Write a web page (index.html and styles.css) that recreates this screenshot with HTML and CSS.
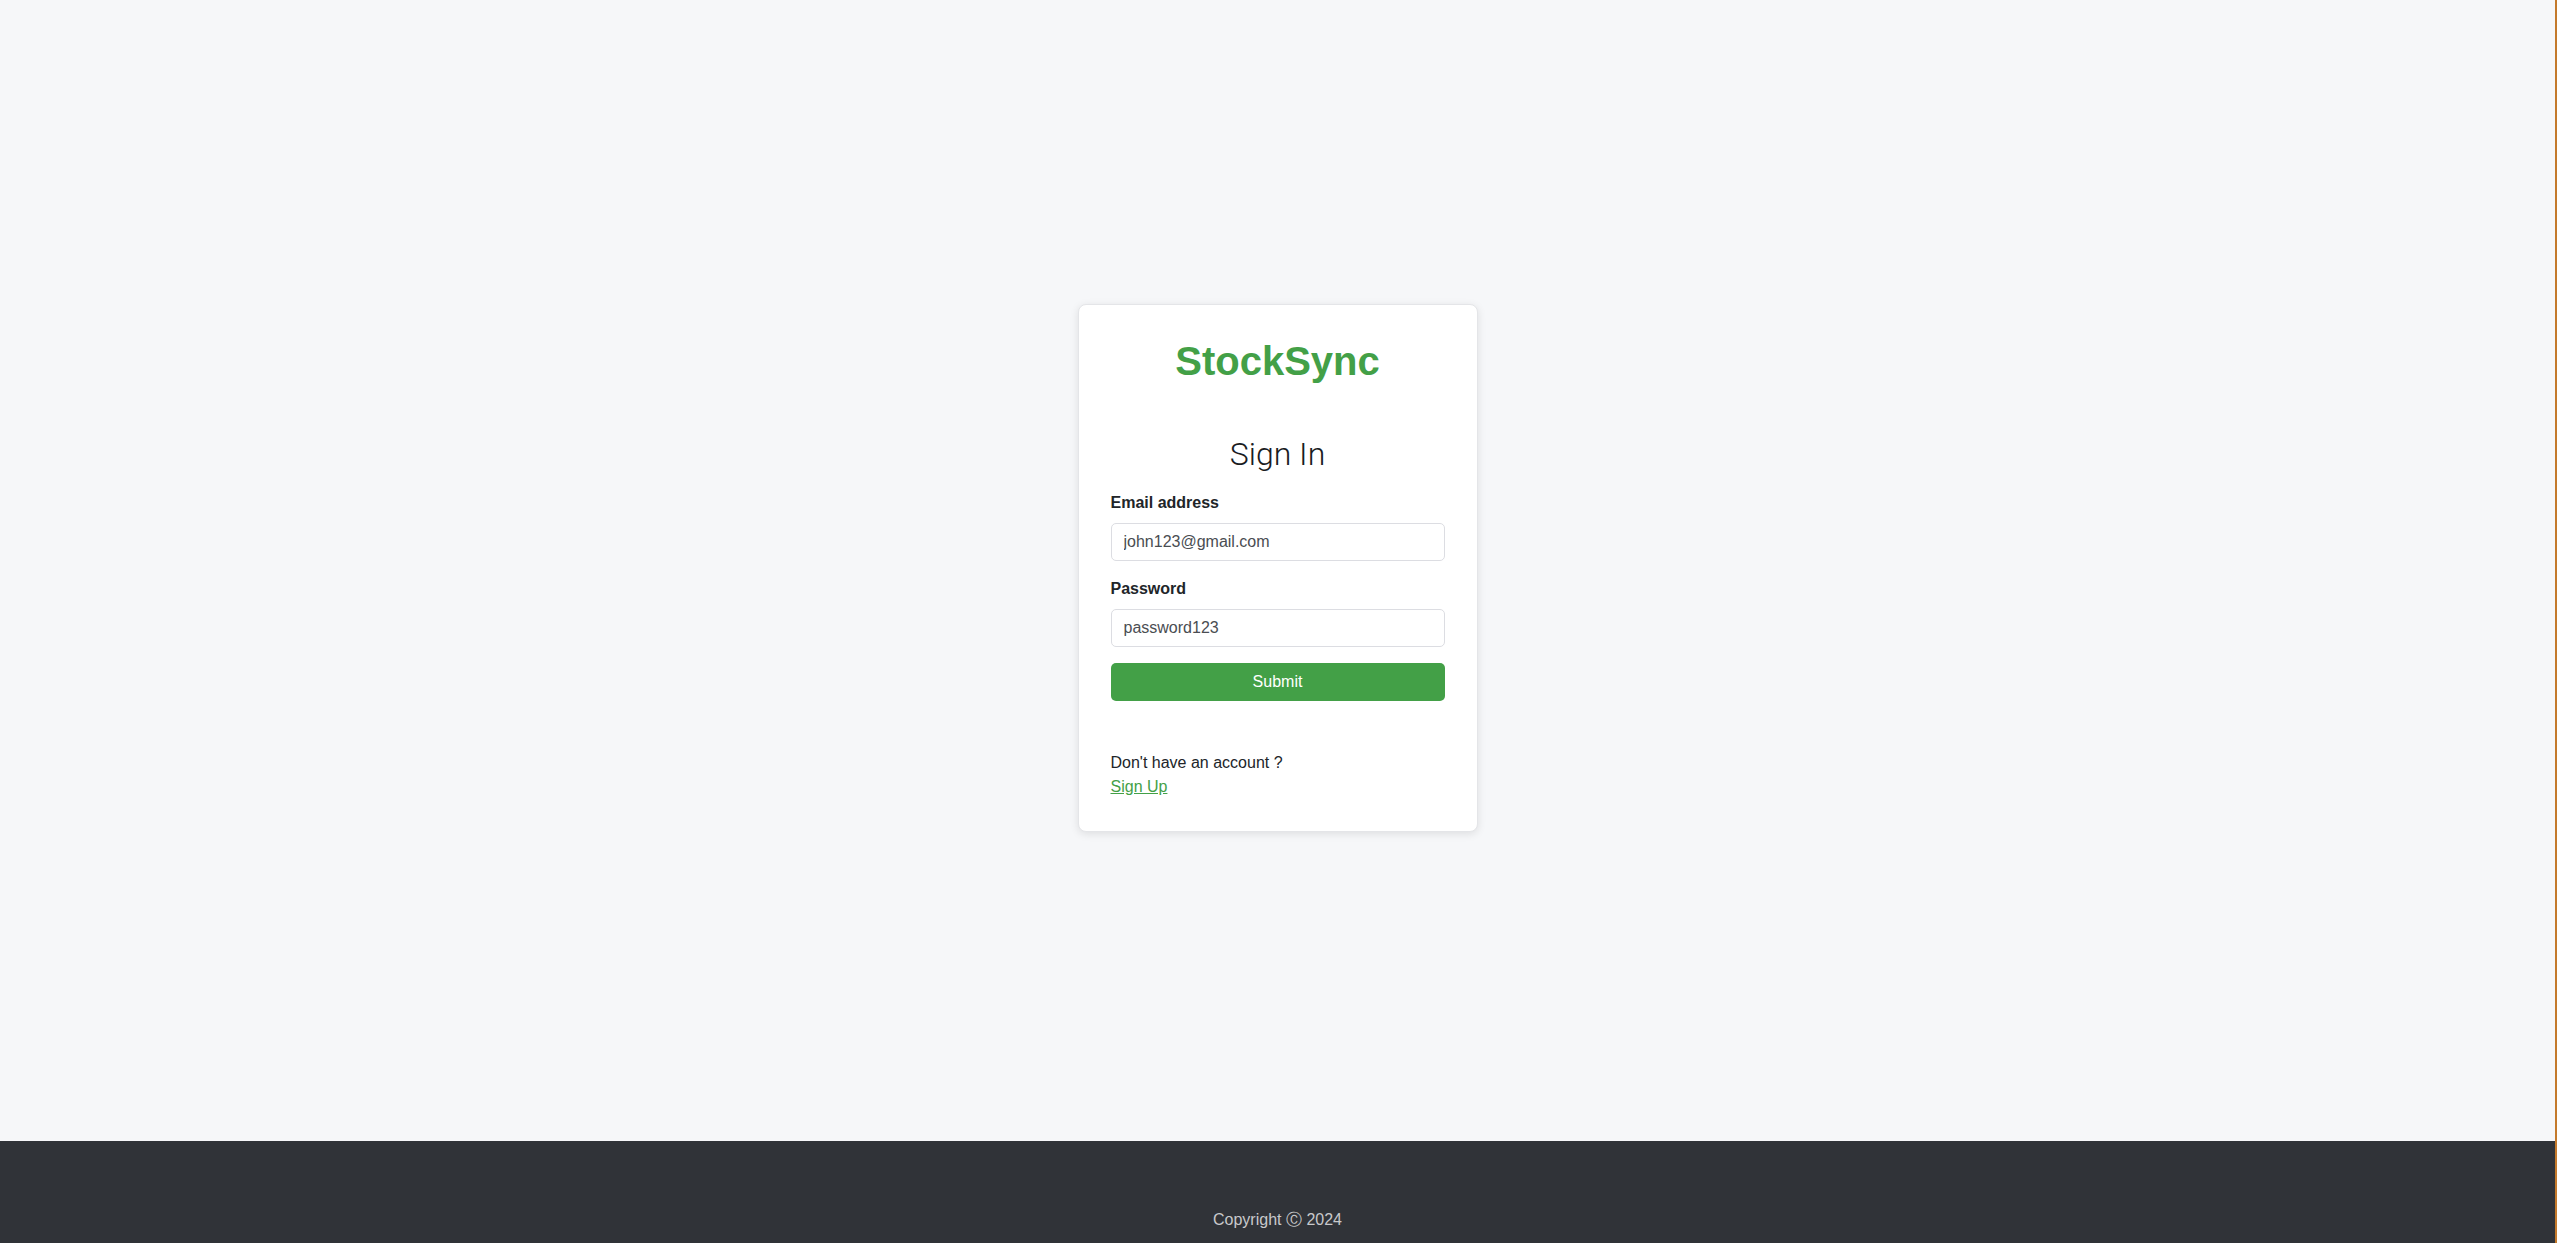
FILE: index.html
```html
<!DOCTYPE html>
<html lang="en">
<head>
<meta charset="utf-8">
<title>StockSync - Sign In</title>
<link rel="stylesheet" href="styles.css">
</head>
<body>
<div class="page">
  <main class="main">
    <div class="card">
      <h1 class="brand">StockSync</h1>
      <h2 class="title">Sign In</h2>
      <form class="form">
        <div class="field">
          <label class="label" for="email">Email address</label>
          <input class="input" id="email" type="email" value="john123@gmail.com">
        </div>
        <div class="field">
          <label class="label" for="password">Password</label>
          <input class="input" id="password" type="text" value="password123">
        </div>
        <button class="submit" type="button">Submit</button>
      </form>
      <div class="signup">
        <p class="signup-text">Don't have an account ?</p>
        <a class="signup-link" href="#">Sign Up</a>
      </div>
    </div>
  </main>
  <footer class="footer">
    <p class="copyright">Copyright Ⓒ 2024</p>
  </footer>
</div>
</body>
</html>
```
FILE: styles.css
```css
* { box-sizing: border-box; }
html, body {
  margin: 0;
  padding: 0;
  height: 100%;
}
body {
  font-family: "Liberation Sans", Arial, sans-serif;
  font-size: 16px;
  line-height: 1.5;
  color: #212529;
  background: #f6f7f9;
  overflow: hidden;
}
.page {
  display: flex;
  flex-direction: column;
  height: 1243px;
  border-right: 2px solid #c47a2c;
}
.main {
  height: 1141px;
  display: flex;
  flex-direction: column;
  align-items: center;
  padding-top: 304px;
}
.card {
  width: 400px;
  background: #fff;
  border: 1px solid #e4e5e8;
  border-radius: 8px;
  box-shadow: 0 2px 8px rgba(0, 0, 0, 0.10);
  padding: 32px;
  display: flex;
  flex-direction: column;
}
.brand {
  margin: 0;
  font-size: 40px;
  line-height: 1.2;
  font-weight: 700;
  color: #43a047;
  text-align: center;
}
.title {
  margin: 50px 0 18px;
  font-family: Roboto, "Liberation Sans", sans-serif;
  font-size: 32px;
  font-weight: 300;
  line-height: 1.2;
  color: #1a1c1f;
  text-align: center;
}
.form {
  display: flex;
  flex-direction: column;
}
.field {
  display: flex;
  flex-direction: column;
  margin-bottom: 16px;
}
.label {
  font-weight: 700;
  margin-bottom: 8px;
  color: #212529;
}
.input {
  font-family: "Liberation Sans", Arial, sans-serif;
  font-size: 16px;
  line-height: 24px;
  height: 38px;
  padding: 6px 12px;
  border: 1px solid #dcdde2;
  border-radius: 5px;
  color: #4a4d52;
  background: #fff;
}
.submit {
  height: 38px;
  border: none;
  border-radius: 5px;
  background: #43a047;
  color: #fff;
  font-family: "Liberation Sans", Arial, sans-serif;
  font-size: 16px;
  padding: 0;
}
.signup {
  margin-top: 50px;
  display: flex;
  flex-direction: column;
  align-items: flex-start;
}
.signup-text {
  margin: 0;
  color: #212529;
}
.signup-link {
  color: #43a047;
  text-decoration: underline;
}
.footer {
  flex: 1;
  background: #303338;
  padding-top: 67px;
}
.copyright {
  margin: 0;
  text-align: center;
  color: #c8c9cb;
}
```
